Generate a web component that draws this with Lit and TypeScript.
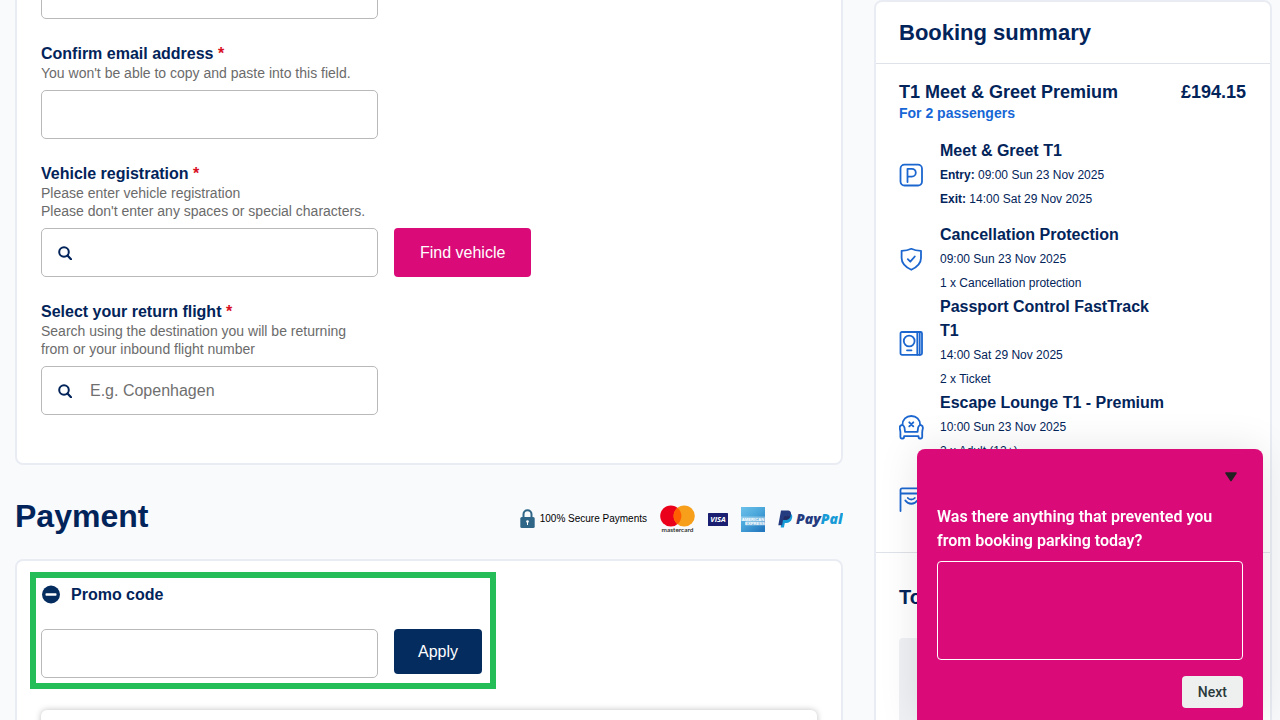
import { LitElement, html, css, svg, nothing } from "lit";
import { customElement, property } from "lit/decorators.js";

interface SummaryItem {
  icon: string;
  title?: string;
  lines: { label?: string; text: string }[];
  spaced?: boolean;
}

const items: SummaryItem[] = [
  {
    icon: "parking",
    title: "Meet & Greet T1",
    lines: [
      { label: "Entry:", text: "09:00 Sun 23 Nov 2025" },
      { label: "Exit:", text: "14:00 Sat 29 Nov 2025" },
    ],
    spaced: true,
  },
  {
    icon: "shield",
    title: "Cancellation Protection",
    lines: [{ text: "09:00 Sun 23 Nov 2025" }, { text: "1 x Cancellation protection" }],
  },
  {
    icon: "passport",
    title: "Passport Control FastTrack T1",
    lines: [{ text: "14:00 Sat 29 Nov 2025" }, { text: "2 x Ticket" }],
  },
  {
    icon: "lounge",
    title: "Escape Lounge T1 - Premium",
    lines: [{ text: "10:00 Sun 23 Nov 2025" }, { text: "2 x Adult (12+)" }],
    spaced: true,
  },
  { icon: "bag", lines: [] },
];

const glyphs: Record<string, unknown> = {
  parking: svg`<rect x="1.500" y="1.700" width="21.500" height="20.800" rx="4"/><path d="M8.500 19V5.800h4.400a3.900 3.900 0 0 1 0 7.800H8.500"/>`,
  shield: svg`<path d="M12.300 1.800c3 1.500 6.200 2 9.700 2v7.200c0 5-3.800 9-9.700 11.800C6.400 20 2.600 16 2.600 11V3.800c3.500 0 6.700-.5 9.700-2z"/><path d="M8.800 12.200l2.500 2.500 4.500-5.200"/>`,
  passport: svg`<rect x="1.500" y="1" width="21.500" height="22.800" rx="1.500"/><path d="M18.300 1v22.800M20.700 1v22.800M8 19.300h4.500"/><circle cx="10.200" cy="10" r="5.400"/>`,
  lounge: svg`<path d="M3.500 9.800C3.500 4.500 7.200 1 12.300 1s8.800 3.500 8.800 8.800"/><path d="M6 16.800h12.600c0-1 .2-2.200.5-4 .4-2 1.600-3 3-2.600 1.800.6 2 2.600 1.500 4.300-.3 1.200-.4 2-.4 3v4.600c0 .9-.4 1.400-1.200 1.400h-1.200c-.8 0-1.300-.9-1.300-2.300H5.100c0 1.400-.5 2.300-1.300 2.300H2.600c-.8 0-1.200-.5-1.200-1.400v-4.600c0-1-.1-1.800-.4-3-.5-1.700-.3-3.700 1.500-4.300 1.400-.4 2.600.6 3 2.600.3 1.800.5 3 .5 4z"/><path d="M10.300 7.300l4 4M14.300 7.300l-4 4" stroke-width="1.900"/>`,
  bag: svg`<path d="M1.500 24V3c0-1 .6-1.600 1.600-1.600h18.300c1 0 1.600.6 1.600 1.600v21M1.500 6.500h21.500"/><path d="M8.800 11c1 1.200 2.100 1.500 3.500 1.500s2.500-.3 3.500-1.500M6.300 13.500c3 4.300 9 4.300 12 0"/>`,
};

@customElement("search-icon")
class SearchIcon extends LitElement {
  static styles = css`
    :host { display: block; width: 14px; height: 14px; color: #02245a; }
    svg { display: block; }
  `;
  render() {
    return html`<svg width="14" height="14" viewBox="0 0 14 14" fill="none" stroke="currentColor" stroke-width="2" aria-hidden="true">
      <circle cx="6" cy="6" r="4.800" /><path d="M9.500 9.500L13 13.200" stroke-width="2.200" stroke-linecap="round" />
    </svg>`;
  }
}

@customElement("form-field")
class FormField extends LitElement {
  @property() label = "";
  @property() hint = "";
  @property() name = "";
  @property() placeholder = "";
  @property({ type: Boolean }) search = false;

  static styles = css`
    :host { display: block; width: 337px; max-width: 100%; }
    * { box-sizing: border-box; }
    .label { display: block; font-size: 16px; line-height: 21px; font-weight: 700; color: #02245a; }
    .required { color: #d90f1f; }
    .hint { margin: 0 0 8px; padding-right: 8px; font-size: 14px; line-height: 18px; color: #6b6b6b; white-space: pre-line; }
    .box {
      display: flex;
      align-items: center;
      height: 49px;
      border: 1px solid #b9b9b9;
      border-radius: 5px;
      background: #fff;
    }
    .box search-icon { margin-left: 16px; }
    .input {
      flex: 1;
      min-width: 0;
      height: 100%;
      border: 0;
      padding: 0 16px;
      background: transparent;
      outline: none;
      font: 16px/24px "Liberation Sans", Arial, sans-serif;
      color: #02245a;
    }
    .input::placeholder { color: #6f6f6f; opacity: 1; }
    .box search-icon + .input { padding-left: 18px; }
  `;
  render() {
    return html`
      ${this.label
        ? html`<label class="label" for="control">${this.label} <span class="required">*</span></label>`
        : nothing}
      ${this.hint ? html`<p class="hint" id="hint">${this.hint}</p>` : nothing}
      <div class="box">
        ${this.search ? html`<search-icon></search-icon>` : nothing}
        <input class="input" id="control" type="text" name=${this.name} aria-label=${this.label ? nothing : this.name} placeholder=${this.placeholder} />
      </div>
    `;
  }
}

@customElement("payment-logos")
class PaymentLogos extends LitElement {
  static styles = css`
    :host { display: flex; align-items: center; gap: 13px; }
    svg { display: block; flex: none; }
    .secure { display: flex; align-items: center; gap: 5px; font-size: 10px; line-height: 14px; color: #000; white-space: nowrap; }
  `;
  render() {
    return html`
      <span class="secure">
        <svg width="15" height="20" viewBox="0 0 15 20" aria-hidden="true">
          <path d="M3.500 9V5.200a4 4 0 0 1 8 0V9" fill="none" stroke="#2f6587" stroke-width="2" />
          <rect x="0.300" y="8" width="14.400" height="11" rx="1.500" fill="#2f6587" />
          <circle cx="7.500" cy="12.500" r="1.300" fill="#fff" /><path d="M7.500 13v3" stroke="#fff" stroke-width="1" />
        </svg>
        100% Secure Payments
      </span>
      <svg width="35" height="30" viewBox="0 0 35 30" role="img" aria-label="mastercard">
        <circle cx="10.800" cy="12" r="10.600" fill="#eb001b" />
        <circle cx="24.200" cy="12" r="10.600" fill="#f79e1b" />
        <path d="M17.500 3.800a10.600 10.600 0 0 1 0 16.400a10.600 10.600 0 0 1 0-16.400z" fill="#ff5f00" />
        <text x="17.500" y="27.500" text-anchor="middle" font-family="Lato, sans-serif" font-weight="600" font-size="6.500" fill="#231f20">mastercard</text>
      </svg>
      <svg width="20" height="13" viewBox="0 0 20 13" role="img" aria-label="VISA">
        <rect width="20" height="13" rx="0.500" fill="#1a1f71" />
        <text x="10" y="9.300" text-anchor="middle" font-family="Open Sans, sans-serif" font-style="italic" font-weight="700" font-size="7.500" fill="#fff">VISA</text>
      </svg>
      <svg width="24" height="25" viewBox="0 0 24 25" role="img" aria-label="AMERICAN EXPRESS">
        <defs>
          <linearGradient id="amex" x1="0" y1="0" x2="0.800" y2="1">
            <stop offset="0" stop-color="#6cc1ea" /><stop offset="0.500" stop-color="#4aa6da" /><stop offset="1" stop-color="#2478bf" />
          </linearGradient>
        </defs>
        <rect width="24" height="25" fill="url(#amex)" />
        <rect y="9.500" width="24" height="4.500" fill="#fff" opacity="0.350" />
        <rect x="4.500" y="14" width="19.500" height="4.500" fill="#fff" opacity="0.350" />
        <text x="12" y="13.600" text-anchor="middle" font-family="Liberation Sans, sans-serif" font-weight="700" font-size="4.200" fill="#fff">AMERICAN</text>
        <text x="14" y="18.200" text-anchor="middle" font-family="Liberation Sans, sans-serif" font-weight="700" font-size="4.200" fill="#fff">EXPRESS</text>
      </svg>
      <svg width="65" height="20" viewBox="0 0 65 20" role="img" aria-label="PayPal">
        <path d="M4.800 4.500h6c3 0 4 2 3.200 4.800-.9 3.300-3 4.700-5.800 4.700H6.800L5.900 18.500H2.700z" fill="#179bd7" />
        <path d="M3 1.500h6.200c3.200 0 4.500 1.800 3.700 4.700-.9 3.400-3.200 4.700-6 4.700H5l-.9 5.300H.3z" fill="#253b80" />
        <path d="M6 7.200h6.600c-1 2.800-3 3.700-5.700 3.700H5.300z" fill="#222d65" />
        <text x="18" y="14.700" font-family="Open Sans, sans-serif" font-style="italic" font-weight="800" font-size="14" fill="#253b80">Pay<tspan fill="#179bd7">Pal</tspan></text>
      </svg>
    `;
  }
}

@customElement("booking-summary")
class BookingSummary extends LitElement {
  static styles = css`
    :host { display: block; box-sizing: border-box; border: 2px solid #e9ecf2; border-radius: 8px; background: #fff; color: #02245a; }
    * { box-sizing: border-box; }
    .heading { margin: 0; padding: 17px 23px 16px; border-bottom: 1px solid #dfe2e8; font-size: 22px; line-height: 28px; }
    .product { padding: 16px 24px 29px 23px; border-bottom: 1px solid #dfe2e8; }
    .title-row { display: flex; justify-content: space-between; font-size: 18px; line-height: 24px; font-weight: 700; }
    .name { margin: 0; font-size: 18px; }
    .passengers { margin: 0 0 17px; font-size: 14px; line-height: 18px; font-weight: 700; color: #1766d6; }
    .list { margin: 0; padding: 0; list-style: none; }
    .item { display: flex; align-items: center; gap: 16px; min-height: 48px; }
    .spaced { margin-bottom: 12px; }
    .icon { display: block; flex: none; color: #1b66cf; }
    .text { max-width: 230px; }
    .item-title { margin: 0; font-size: 16px; line-height: 24px; }
    .line { margin: 0; font-size: 12px; line-height: 24px; }
    .total { margin: 0; padding: 30px 23px 27px; font-size: 20px; line-height: 28px; }
    .notice { height: 120px; margin: 0 24px 24px 23px; border-radius: 4px; background: #f0f1f4; }
  `;
  render() {
    return html`
      <h2 class="heading">Booking summary</h2>
      <section class="product">
        <div class="title-row"><h3 class="name">T1 Meet &amp; Greet Premium</h3><span>£194.15</span></div>
        <p class="passengers">For 2 passengers</p>
        <ul class="list">
          ${items.map(
            (item) => html`<li class="item ${item.spaced ? "spaced" : ""}">
              <svg class="icon" width="25" height="25" viewBox="0 0 25 25" fill="none" stroke="currentColor" stroke-width="1.800" stroke-linecap="round" stroke-linejoin="round" aria-hidden="true">${glyphs[item.icon]}</svg>
              <div class="text">
                ${item.title ? html`<h4 class="item-title">${item.title}</h4>` : nothing}
                ${item.lines.map((l) => html`<p class="line">${l.label ? html`<b>${l.label}</b> ` : nothing}${l.text}</p>`)}
              </div>
            </li>`
          )}
        </ul>
      </section>
      <h3 class="total">Total</h3>
      <div class="notice"></div>
    `;
  }
}

@customElement("feedback-survey")
class FeedbackSurvey extends LitElement {
  static styles = css`
    :host {
      display: flex;
      flex-direction: column;
      box-sizing: border-box;
      padding: 19px 20px 12px;
      border-radius: 8px 8px 0 0;
      background: #da0b79;
      box-shadow: 0 0 40px rgba(0, 0, 0, 0.1);
      font-family: Roboto, sans-serif;
    }
    .collapse { align-self: flex-end; display: flex; margin-bottom: 19px; padding: 4px 5px; border: 0; background: none; }
    .question { margin-bottom: 8px; font-size: 16px; line-height: 24px; font-weight: 600; color: #fff; }
    .answer { box-sizing: border-box; width: 100%; height: 99px; border: 1px solid #fff; border-radius: 4px; background: transparent; color: #fff; resize: none; font: inherit; }
    .next { align-self: flex-end; margin-top: 16px; padding: 0 16px; height: 32px; border: 0; border-radius: 4px; background: #eef0f0; color: #2b3a3a; font: 500 14px/20px Roboto, sans-serif; }
  `;
  render() {
    return html`
      <button class="collapse" type="button" aria-label="Collapse">
        <svg width="14" height="10" viewBox="0 0 14 10" aria-hidden="true"><path d="M2 1h10L7 8.500z" fill="#222" stroke="#222" stroke-width="1.600" stroke-linejoin="round" /></svg>
      </button>
      <label class="question" for="answer">Was there anything that prevented you from booking parking today?</label>
      <textarea class="answer" id="answer"></textarea>
      <button class="next" type="button">Next</button>
    `;
  }
}

@customElement("app-root")
class AppRoot extends LitElement {
  static styles = css`
    :host {
      display: block;
      height: 100vh;
      overflow: hidden;
      background: #f9fafc;
      color: #02245a;
      font-family: "Liberation Sans", Arial, sans-serif;
    }
    * { box-sizing: border-box; }
    .page { display: grid; grid-template-columns: minmax(0, 1fr) 398px; gap: 31px; align-items: start; padding: 0 8px 0 15px; }
    .main { margin-top: -56px; }
    .card { border: 2px solid #e9ecf2; border-radius: 8px; background: #fff; }
    .details { display: flex; flex-direction: column; gap: 24px; padding: 24px 24px 48px; }
    .row { display: flex; align-items: flex-end; gap: 16px; }
    .button { height: 49px; padding: 0 26px; border: 0; border-radius: 4px; color: #fff; font: 16px/24px "Liberation Sans", Arial, sans-serif; white-space: nowrap; }
    .find { background: #da0b79; }
    .apply { height: 45px; padding: 0 24px; background: #042c5f; }
    .payment-head { display: flex; align-items: flex-start; justify-content: space-between; height: 94px; padding-top: 31px; }
    .payment-head payment-logos { margin-top: 8px; }
    .heading { margin: 0; font-size: 32px; line-height: 40px; }
    .payment { padding: 11px 24px 24px 13px; }
    .promo { width: fit-content; padding: 3px 8px 5px 5px; border: 6px solid #25bd57; }
    .toggle { display: flex; align-items: center; gap: 10px; margin-bottom: 21px; padding: 0; border: 0; background: none; color: inherit; font: 700 16px/27px "Liberation Sans", Arial, sans-serif; }
    .promo .row { align-items: flex-start; }
    .method { height: 120px; margin: 21px 0 0 11px; border-radius: 6px; background: #fff; box-shadow: 0 0 6px rgba(0, 0, 0, 0.25); }
    .survey { position: fixed; right: 17px; bottom: 0; width: 346px; }
  `;
  render() {
    return html`
      <div class="page">
        <main class="main">
          <form class="card details">
            <form-field name="Email address"></form-field>
            <form-field label="Confirm email address" name="confirm-email" hint="You won't be able to copy and paste into this field."></form-field>
            <div class="row">
              <form-field search label="Vehicle registration" name="registration" hint=${"Please enter vehicle registration\nPlease don't enter any spaces or special characters."}></form-field>
              <button class="button find" type="button">Find vehicle</button>
            </div>
            <form-field search label="Select your return flight" name="flight" hint="Search using the destination you will be returning from or your inbound flight number" placeholder="E.g. Copenhagen"></form-field>
          </form>
          <header class="payment-head">
            <h1 class="heading">Payment</h1>
            <payment-logos></payment-logos>
          </header>
          <section class="card payment">
            <div class="promo">
              <button class="toggle" type="button" aria-expanded="true">
                <svg width="20" height="20" viewBox="0 0 20 20" aria-hidden="true"><circle cx="10" cy="9.500" r="9" fill="#042c5f" /><rect x="4.500" y="8.200" width="11" height="2.600" rx="0.800" fill="#fff" /></svg>
                Promo code
              </button>
              <div class="row">
                <form-field name="Promo code"></form-field>
                <button class="button apply" type="button">Apply</button>
              </div>
            </div>
            <div class="method"></div>
          </section>
        </main>
        <aside><booking-summary></booking-summary></aside>
      </div>
      <feedback-survey class="survey"></feedback-survey>
    `;
  }
}
